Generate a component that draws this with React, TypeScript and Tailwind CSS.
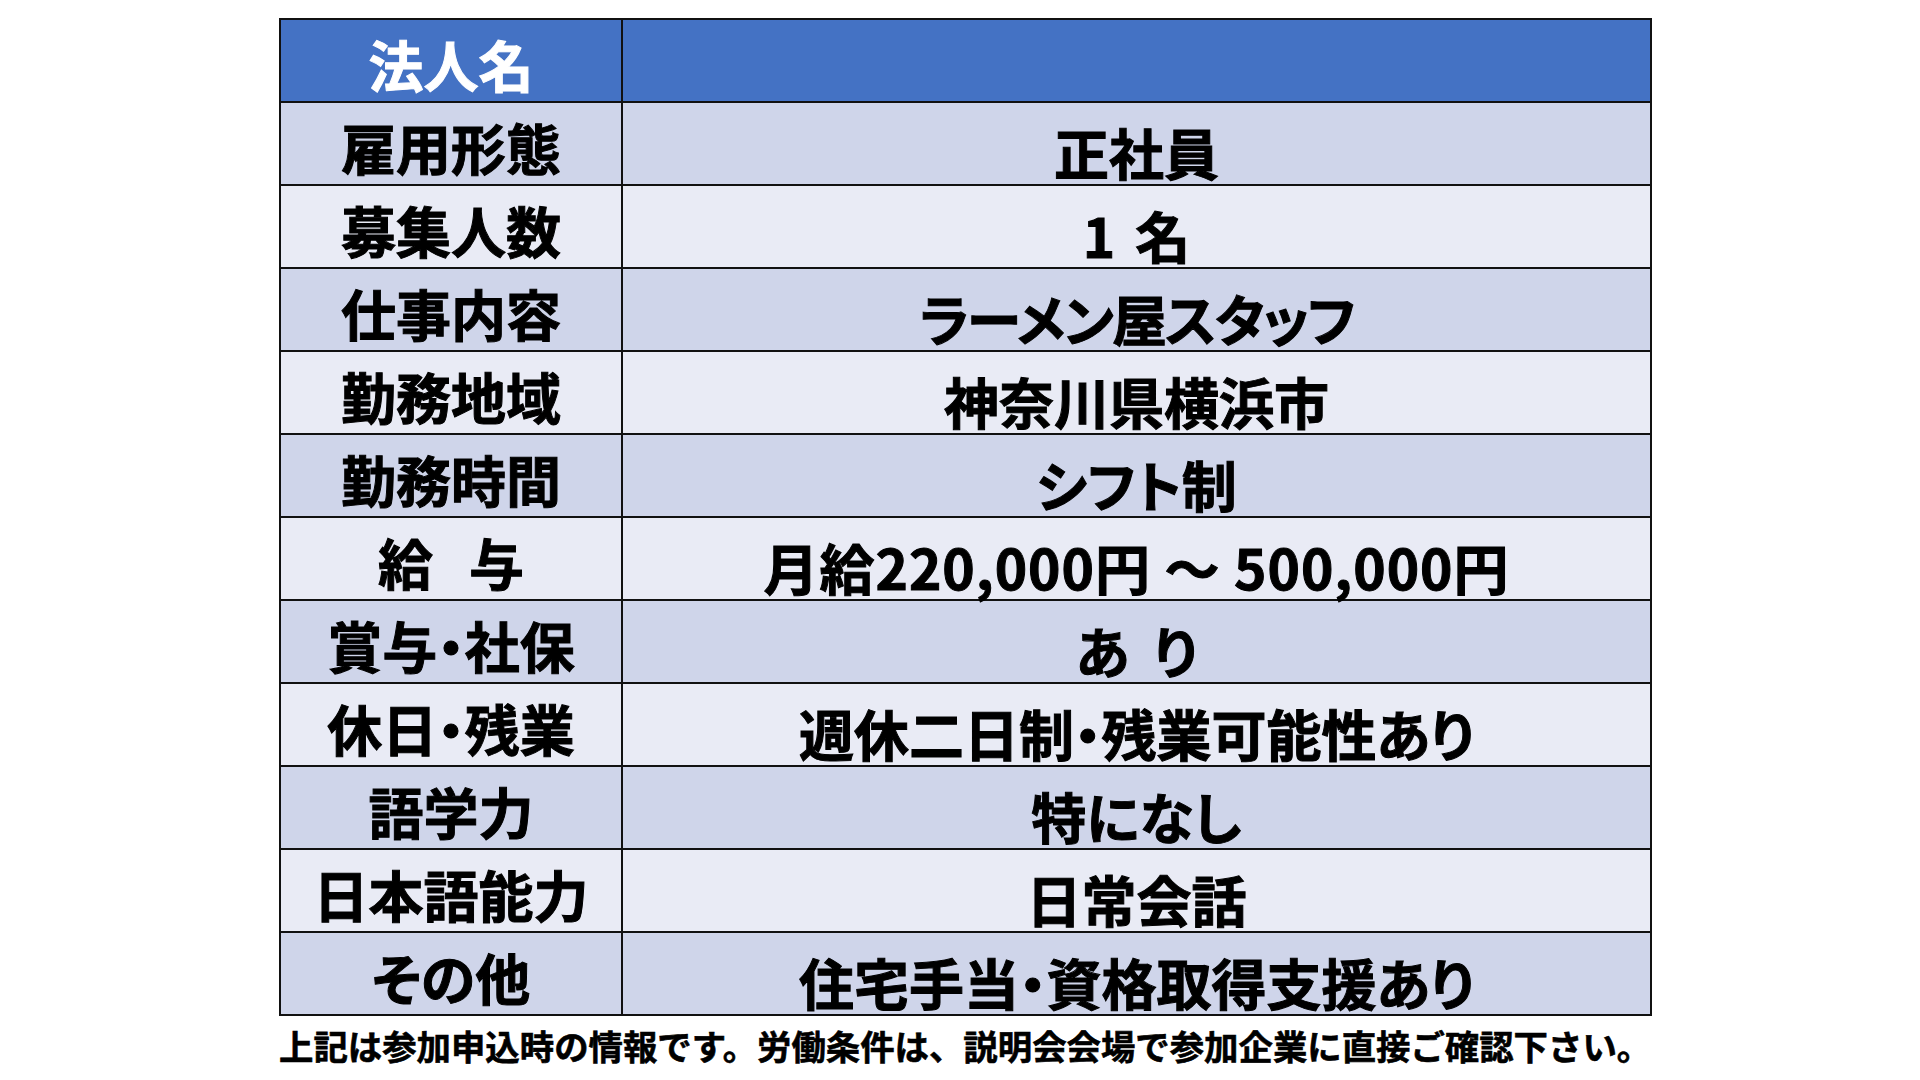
import type { ReactNode } from 'react'

const rows: { label: ReactNode; value: ReactNode; key: string }[] = [
  { key: 'koyou', label: '雇用形態', value: '正社員' },
  {
    key: 'boshu',
    label: '募集人数',
    value: (
      <>
        1<span className="inline-block w-[20px]" />名
      </>
    ),
  },
  { key: 'shigoto', label: '仕事内容', value: <span className="tracking-[-2px]">ラーメン屋スタッフ</span> },
  { key: 'chiiki', label: '勤務地域', value: '神奈川県横浜市' },
  { key: 'jikan', label: '勤務時間', value: 'シフト制' },
  {
    key: 'kyuyo',
    label: (
      <>
        給<span className="inline-block w-[36px]" />与
      </>
    ),
    value: <span className="tracking-[1px]">月給220,000円 ～ 500,000円</span>,
  },
  {
    key: 'shoyo',
    label: '賞与・社保',
    value: (
      <>
        あ<span className="inline-block w-[24px]" />り
      </>
    ),
  },
  { key: 'kyujitsu', label: '休日・残業', value: '週休二日制・残業可能性あり' },
  { key: 'gogaku', label: '語学力', value: '特になし' },
  { key: 'nihongo', label: '日本語能力', value: '日常会話' },
  { key: 'sonota', label: 'その他', value: '住宅手当・資格取得支援あり' },
]

const App = () => {
  return (
    <div className="w-[1920px] h-[1080px] bg-white font-['Noto_Sans_CJK_JP','Noto_Sans',sans-serif] text-black">
      <div className="pt-[18px] pl-[279px]">
        {/* recruitment table */}
        <div className="w-[1373px] border-2 border-[#111] [font-feature-settings:'palt'] font-bold">
          <div className="flex h-[81px] bg-[#4472c4]">
            <div className="w-[342px] border-r-2 border-[#111] flex items-center justify-center pt-1.5 text-[55px] leading-none text-white [-webkit-text-stroke:1px_white]">
              法人名
            </div>
            <div className="flex-1" />
          </div>
          {rows.map((row, i) => (
            <div
              key={row.key}
              className={`flex h-[83px] border-t-2 border-[#111] ${i % 2 === 0 ? 'bg-[#cfd5ea]' : 'bg-[#e9ebf5]'}`}
            >
              <div className="w-[342px] border-r-2 border-[#111] flex items-center justify-center pt-1.5 text-[55px] leading-none whitespace-pre [-webkit-text-stroke:1px_black]">
                {row.label}
              </div>
              <div className="flex-1 flex items-center justify-center pt-4 text-[55px] leading-none whitespace-pre [-webkit-text-stroke:1px_black]">
                {row.value}
              </div>
            </div>
          ))}
        </div>
        <p className="mt-[12px] text-[34.4px] leading-none font-bold whitespace-nowrap [-webkit-text-stroke:0.6px_black]">
          上記は参加申込時の情報です。労働条件は、説明会会場で参加企業に直接ご確認下さい。
        </p>
      </div>
    </div>
  )
}

export default App
